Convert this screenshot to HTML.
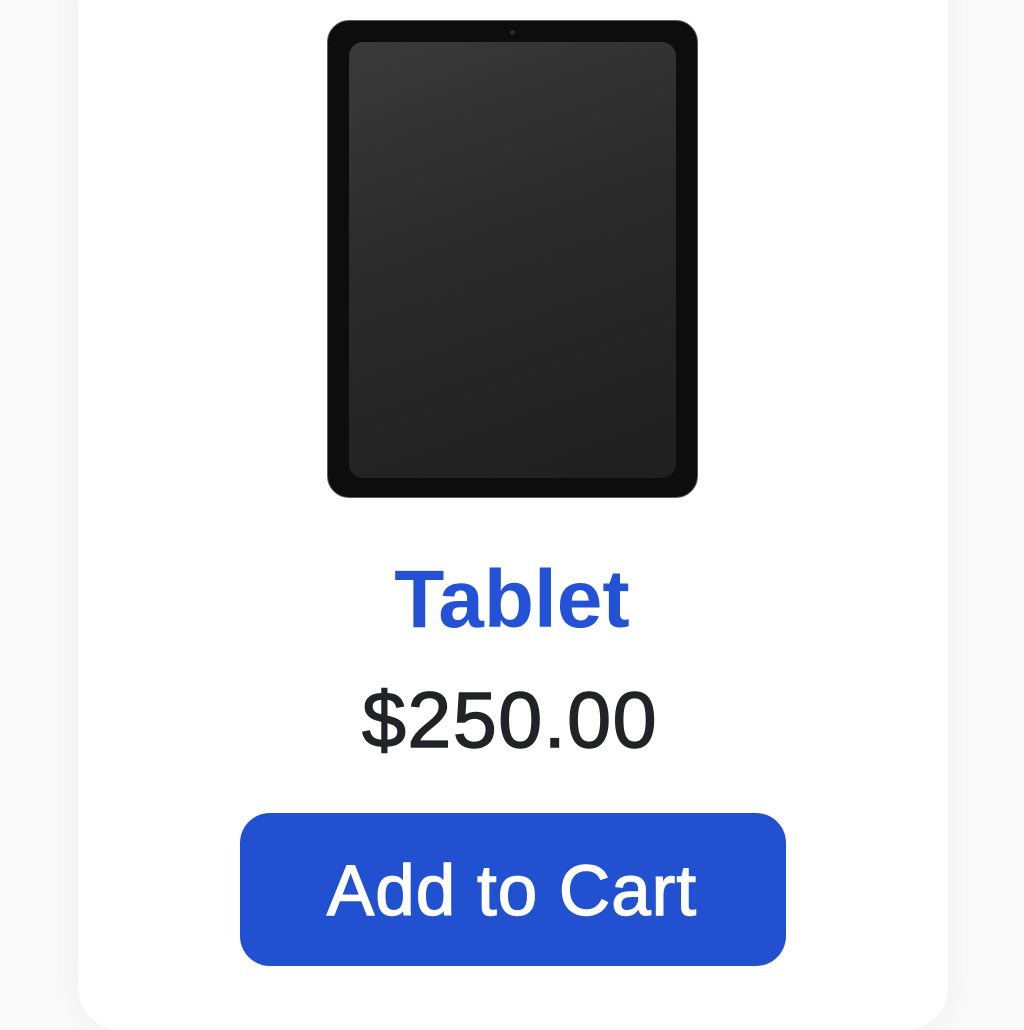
<!DOCTYPE html>
<html><head><style>
html,body{margin:0;padding:0;width:1024px;height:1024px;overflow:hidden;background:#fafafa;font-family:"Liberation Sans",sans-serif;}
.card{position:absolute;left:78px;top:-60px;width:870px;height:1090px;background:#fff;border-radius:42px;box-shadow:0 0 40px rgba(0,0,0,0.05);}
.tab{position:absolute;left:327px;top:20px;width:371px;height:478px;border-radius:22px;background:#0d0d0d;border:1.5px solid #5a5d63;box-sizing:border-box;}
.scr{position:absolute;left:349px;top:42px;width:327px;height:436px;border-radius:14px;background:linear-gradient(160deg,#3a3a3a 0%,#2a2a2a 45%,#1f1f1f 100%);}
.cam{position:absolute;left:510px;top:30px;width:5px;height:5px;border-radius:50%;background:#2a2a2e;}
.t{position:absolute;left:0;width:1024px;text-align:center;line-height:1;white-space:nowrap;}
.btn{position:absolute;left:240px;top:813px;width:546px;height:153px;border-radius:30px;background:#2150d0;}
</style></head><body>
<div class="card"></div>
<div class="tab"></div>
<div class="scr"></div>
<div class="cam"></div>
<div class="t" style="top:559px;font-size:82px;font-weight:bold;color:#2352d6;">Tablet</div>
<div class="t" style="top:680px;font-size:79px;color:#222326;left:-2px;letter-spacing:1.5px;-webkit-text-stroke:1.4px #222326;">$250.00</div>
<div class="btn"></div>
<div class="t" style="top:856px;font-size:71px;color:#fff;letter-spacing:1px;-webkit-text-stroke:1.4px #fff;">Add to Cart</div>
</body></html>
